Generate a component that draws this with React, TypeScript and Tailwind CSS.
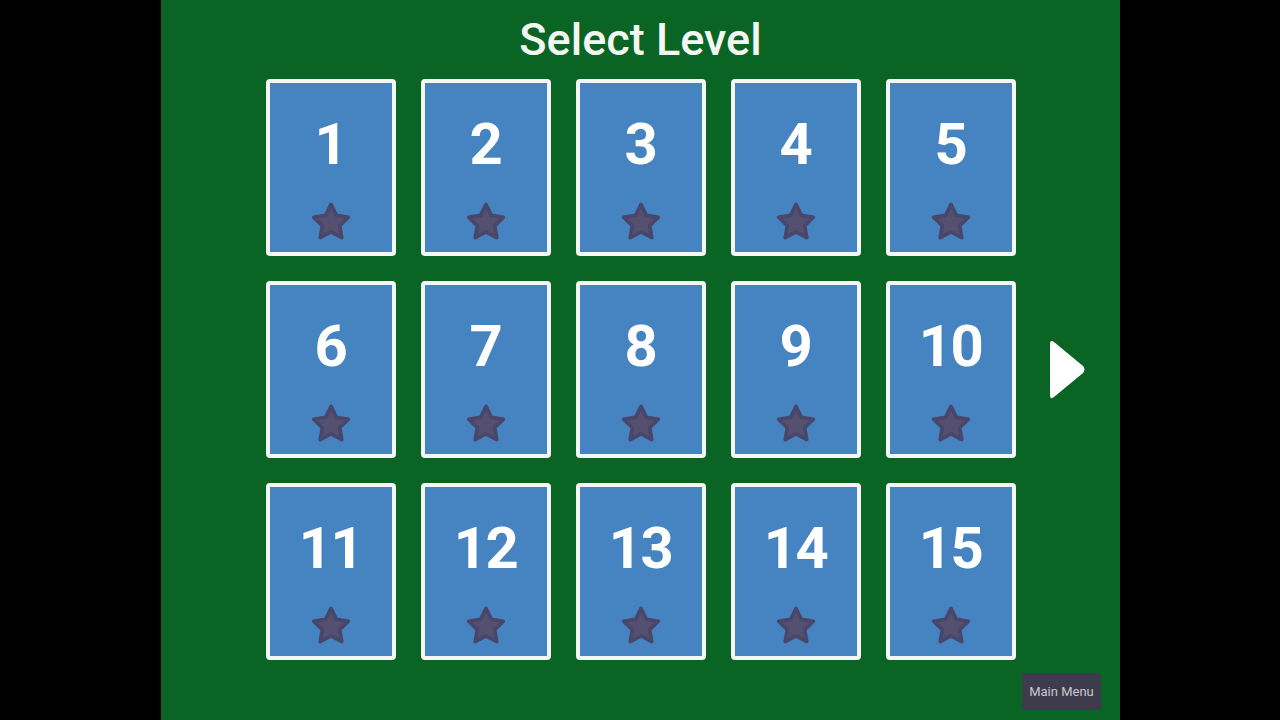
import React from "react";

const levels = Array.from({ length: 15 }, (_, i) => i + 1);

function Star() {
  return (
    <svg width="48" height="48" viewBox="0 0 24 24" aria-hidden="true">
      <path
        d="M12 3.2l2.7 5.5 6 .9-4.35 4.2 1.05 6L12 16.9l-5.4 2.9 1.05-6L3.3 9.6l6-.9z"
        fill="#55506f"
        stroke="#48466a"
        strokeWidth="1.8"
        strokeLinejoin="round"
      />
    </svg>
  );
}

function LevelCard({ n }: { n: number }) {
  return (
    <button className="w-[130px] h-[177px] rounded-[4px] border-4 border-[#f4f7f6] bg-[#4683c1] flex flex-col items-center">
      <span className="mt-[26px] text-[58px] leading-[70px] font-bold text-white tracking-tight">{n}</span>
      <span className="mt-[19px]">
        <Star />
      </span>
    </button>
  );
}

export default function App() {
  return (
    <div className="w-[1280px] h-[720px] flex bg-black" style={{ fontFamily: "Roboto, 'Noto Sans', sans-serif" }}>
      <div className="w-[161px] shrink-0" />
      <div className="relative w-[959px] h-full bg-[#0a6424] flex flex-col items-center">
        <h1 className="mt-[13px] text-[45px] leading-[54px] font-medium text-[#f2f7f2]">Select Level</h1>
        <div className="mt-[12px] grid grid-cols-5 gap-x-[25px] gap-y-[25px]">
          {levels.map((n) => (
            <LevelCard key={n} n={n} />
          ))}
        </div>
        <button className="absolute left-[886px] top-[339px] w-[40px] h-[61px]" aria-label="Next">
          <svg width="40" height="61" viewBox="0 0 40 61">
            <path d="M3 5 Q3 0 7 3 L36 27 Q39 30.5 36 34 L7 58 Q3 61 3 56 Z" fill="#ffffff" />
          </svg>
        </button>
        <button className="absolute right-[19px] bottom-[10px] w-[79px] h-[37px] bg-[#3e3b4c] rounded-[2px] text-[13px] text-[#c9c8cf]">
          Main Menu
        </button>
      </div>
      <div className="flex-1" />
    </div>
  );
}
